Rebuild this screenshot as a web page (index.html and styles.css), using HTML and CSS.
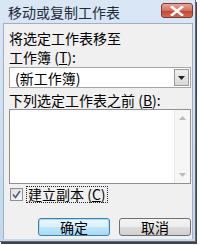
FILE: index.html
```html
<!DOCTYPE html>
<html lang="zh-CN">
<head>
  <meta charset="UTF-8">
  <title>移动或复制工作表</title>
  <link rel="stylesheet" href="styles.css">
</head>
<body>
  <div class="ventana">
    <div class="titulo">
      <span>移动或复制工作表</span>
      <div class="cerrar">
        <svg width="14" height="10" viewBox="0 0 14 10">
          <path d="M2 1 L12 9 M12 1 L2 9" stroke="#fff" stroke-width="2.6" stroke-linecap="square"/>
        </svg>
      </div>
    </div>
    <div class="cliente">
      <div class="texto intro">将选定工作表移至</div>
      <div class="texto">工作簿 (<u>T</u>):</div>
      <div class="combo">
        <span>(新工作簿)</span>
        <div class="flecha">
          <svg width="7" height="4" viewBox="0 0 7 4"><path d="M0 0 H7 L3.5 4 Z" fill="#222"/></svg>
        </div>
      </div>
      <div class="texto etiqueta-lista">下列选定工作表之前 (<u>B</u>):</div>
      <div class="lista">
        <div class="barra">
          <svg width="7" height="4" viewBox="0 0 7 4"><path d="M0 4 H7 L3.5 0 Z" fill="#bbb"/></svg>
          <svg width="7" height="4" viewBox="0 0 7 4"><path d="M0 0 H7 L3.5 4 Z" fill="#bbb"/></svg>
        </div>
      </div>
      <div class="check">
        <div class="caja">
          <svg width="9" height="9" viewBox="0 0 9 9"><path d="M1 4.5 L3.5 7.5 L8 1" stroke="#4a5a7a" stroke-width="1.6" fill="none"/></svg>
        </div>
        <span class="foco">建立副本 (<u>C</u>)</span>
      </div>
      <div class="botones">
        <button class="btn defecto">确定</button>
        <button class="btn">取消</button>
      </div>
    </div>
  </div>
</body>
</html>
```

FILE: styles.css
```css
body {
  margin: 0;
  width: 200px;
  height: 245px;
  background: #fff;
  font-family: "Noto Sans CJK SC", "DejaVu Sans", sans-serif;
  font-size: 14px;
  color: #000;
  overflow: hidden;
}
.ventana {
  width: 193px;
  height: 239px;
  border: 1px solid #5a6a80;
  border-top: none;
  border-left: none;
  background: linear-gradient(to bottom, #d9e7f5, #c4d8ec);
  padding: 0 2px 2px 0;
  display: flex;
  flex-direction: column;
  box-shadow: 1px 2px 0 #444;
}
.ventana > *, .cliente > * {
  flex-shrink: 0;
}
.titulo {
  height: 23px;
  display: flex;
  align-items: flex-start;
  justify-content: space-between;
  padding-left: 8px;
  color: #1e2b3a;
}
.titulo span {
  margin-top: 4px;
  line-height: 17px;
}
.cerrar {
  width: 30px;
  height: 13px;
  margin-top: 3px;
  border: 1px solid #7a3a30;
  border-radius: 3px;
  background: linear-gradient(to bottom, #e8a796, #d5705c 50%, #c0442e 51%, #d86a4e);
  display: flex;
  align-items: center;
  justify-content: center;
}
.cliente {
  flex: 1;
  margin-left: 3px;
  background: #f0f0f0;
  border: 1px solid #9db0c5;
  border-bottom: none;
  padding: 6px 0 0 5px;
  display: flex;
  flex-direction: column;
}
.texto {
  height: 17px;
  line-height: 17px;
}
.intro {
  margin-bottom: 2px;
}
u {
  text-decoration: underline;
}
.combo {
  margin-top: 1px;
  width: 180px;
  height: 19px;
  border: 1px solid #a5a5a5;
  background: #fff;
  display: flex;
  align-items: center;
  justify-content: space-between;
}
.combo span {
  padding-left: 5px;
}
.flecha {
  width: 15px;
  height: 17px;
  margin-right: 1px;
  border: 1px solid #9a9a9a;
  box-sizing: border-box;
  background: linear-gradient(to bottom, #f0f0f0, #d8d8d8);
  display: flex;
  align-items: center;
  justify-content: center;
}
.etiqueta-lista {
  margin-top: 4px;
}
.lista {
  width: 180px;
  height: 73px;
  border: 1px solid #8c8f94;
  background: #fff;
  display: flex;
  justify-content: flex-end;
}
.barra {
  width: 16px;
  border-left: 1px solid #e6e6e6;
  background: #f6f6f6;
  display: flex;
  flex-direction: column;
  justify-content: space-between;
  align-items: center;
  padding: 6px 0;
  box-sizing: border-box;
}
.check {
  margin-top: 2px;
  height: 17px;
  display: flex;
  align-items: center;
  gap: 3px;
  margin-left: 1px;
}
.caja {
  width: 11px;
  height: 11px;
  border: 1px solid #8e8f8f;
  background: linear-gradient(to bottom right, #dcdcdc, #fafafa);
  display: flex;
  align-items: center;
  justify-content: center;
}
.foco {
  border: 1px dotted #222;
  padding: 0 1px;
  line-height: 15px;
}
.botones {
  margin-top: 15px;
  display: flex;
  gap: 9px;
  justify-content: flex-end;
  padding-right: 1px;
}
.btn {
  width: 72px;
  height: 18px;
  font-family: inherit;
  font-size: 14px;
  border: 1px solid #707070;
  border-radius: 3px;
  background: linear-gradient(to bottom, #f4f4f4, #ebebeb 50%, #dcdcdc 51%, #d0d0d0);
  padding: 0;
  line-height: 16px;
}
.defecto {
  border-color: #3c7fb1;
  box-shadow: inset 0 0 0 1px #a6dcf5;
  background: linear-gradient(to bottom, #eaf6fd, #d9f0fc 50%, #bee6fd 51%, #a7d9f5);
}
```
